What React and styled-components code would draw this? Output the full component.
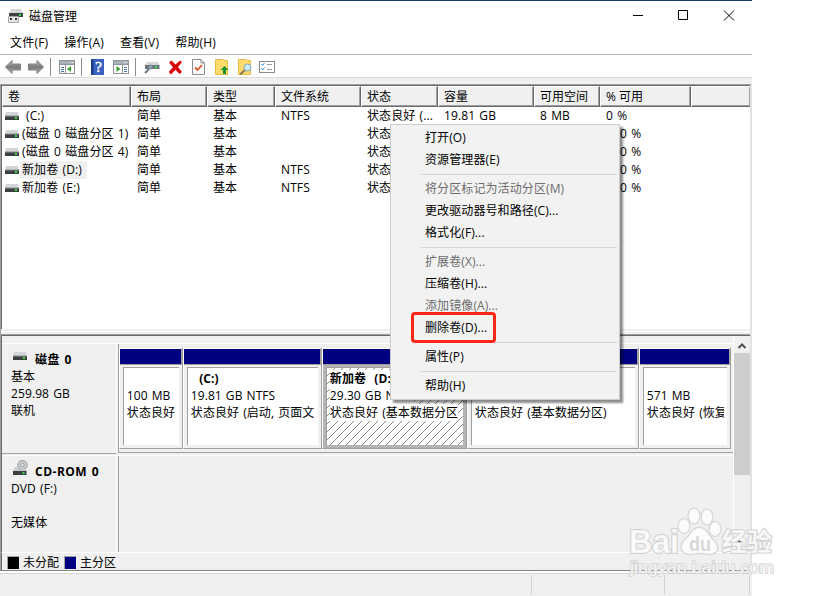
import styled, { createGlobalStyle } from "styled-components";

const columns = ['卷', '布局', '类型', '文件系统', '状态', '容量', '可用空间', '% 可用', '']

const volumes = [
    {name: '(C:)', fs: 'NTFS', status: '状态良好 (...', size: '19.81 GB', free: '8 MB', percent: '0 %', indent: true},
    {name: '(磁盘 0 磁盘分区 1)', status: '状态'},
    {name: '(磁盘 0 磁盘分区 4)', status: '状态'},
    {name: '新加卷 (D:)', fs: 'NTFS', status: '状态', selected: true},
    {name: '新加卷 (E:)', fs: 'NTFS', status: '状态'},
]

const partitions = [
    {name: '', size: '100 MB', status: '状态良好'},
    {name: '\u00a0\u00a0(C:)', size: '19.81 GB NTFS', status: '状态良好 (启动, 页面文'},
    {name: '新加卷\u00a0\u00a0(D:)', size: '29.30 GB NTFS', status: '状态良好 (基本数据分区', selected: true},
    {name: '', size: '', status: '状态良好 (基本数据分区)'},
    {name: '', size: '571 MB', status: '状态良好 (恢复'},
]

const menuGroups = [
    [{label: '打开(O)'}, {label: '资源管理器(E)'}],
    [{label: '将分区标记为活动分区(M)', disabled: true}, {label: '更改驱动器号和路径(C)...'}, {label: '格式化(F)...'}],
    [{label: '扩展卷(X)...', disabled: true}, {label: '压缩卷(H)...'}, {label: '添加镜像(A)...', disabled: true}, {label: '删除卷(D)...', marked: true}],
    [{label: '属性(P)'}],
    [{label: '帮助(H)'}],
]

function DriveIcon() {
    return (
        <svg width="14" height="9" viewBox="0 0 14 9">
            <path d="M1 0H13L14 4H0Z" fill="#d3d6d9" />
            <rect y="4" width="14" height="4" fill="#3c3f42" />
            <rect y="3.5" width="14" height="1" fill="#8e9296" />
            <rect x="10" y="5" width="2" height="2" fill="#35e04a" />
        </svg>
    )
}

function CdIcon() {
    return (
        <svg width="16" height="16" viewBox="0 0 16 16">
            <path d="M2 7H12L14 11H0Z" fill="#d3d6d9" />
            <circle cx="9.5" cy="5" r="4.6" fill="#ccd0d1" stroke="#92989a" />
            <circle cx="9.5" cy="5" r="1.7" fill="#f4f4f4" stroke="#92989a" />
            <path d="M2 9H12L14 11H0Z" fill="#c5c9cb" />
            <rect y="11" width="13.500" height="4" fill="#3c3f42" />
            <rect x="9.500" y="12" width="2" height="2" fill="#35e04a" />
        </svg>
    )
}

function AppIcon() {
    return (
        <svg width="17" height="16" viewBox="0 0 17 16">
            <path d="M4 1H14L16 5H2Z" fill="#d5d7d9" />
            <rect x="2" y="5" width="14" height="4" fill="#3d4042" />
            <rect x="12" y="6" width="2" height="2" fill="#35e04a" />
            <path d="M1.500 8.500H11.500V14.500H1.500Z" fill="#e7e7e7" stroke="#a4a7a9" />
            <rect x="3" y="10" width="2" height="2" fill="#333" />
            <rect x="8" y="10" width="2" height="2" fill="#333" />
        </svg>
    )
}

function Arrow({right}) {
    return (
        <svg width="17" height="16" viewBox="0 0 17 16">
            <defs>
                <linearGradient id="arrowFill" x1="0" y1="0" x2="0" y2="1">
                    <stop offset="0" stopColor="#c4c4c4" />
                    <stop offset="0.5" stopColor="#777" />
                    <stop offset="1" stopColor="#bbb" />
                </linearGradient>
            </defs>
            <path transform={right ? 'translate(16 0) scale(-1 1)' : undefined} d="M0.500 8L7 1.500V5H15.500V11H7V14.500Z" fill="url(#arrowFill)" stroke="#7d7d7d" strokeLinejoin="round" />
        </svg>
    )
}

function PaneIcon({right}) {
    return (
        <svg width="17" height="14" viewBox="0 0 17 14">
            <rect x="0.500" y="0.500" width="15" height="13" fill="#fff" stroke="#8e949b" />
            <rect x="1" y="1" width="14" height="3" fill="#a9b0b8" />
            <path d="M11 2.500H12M13 2.500H14" stroke="#fff" />
            <path d="M1 4.500H15" stroke="#8e949b" />
            {right ? (
                <>
                    <path d="M9.500 5V13" stroke="#8e949b" />
                    <path d="M11 7.500H14M11 9.500H14M11 11.500H14" stroke="#4b79b8" />
                    <path d="M3.500 6L7.500 9L3.500 12Z" fill="#36a226" />
                </>
            ) : (
                <>
                    <path d="M6.500 5V13" stroke="#8e949b" />
                    <path d="M2 7.500H5M2 9.500H5M2 11.500H5" stroke="#4b79b8" />
                    <path d="M12 6L8 9L12 12Z" fill="#36a226" />
                </>
            )}
        </svg>
    )
}

function HelpIcon() {
    return (
        <svg width="14" height="16" viewBox="-1 0 14 16">
            <rect width="13" height="16" fill="#3d62be" />
            <rect width="2.500" height="16" fill="#1d3c8c" />
            <text x="7.500" y="13" textAnchor="middle" fontSize="15" fontFamily="Liberation Serif, serif" fill="#fff" stroke="#fff" strokeWidth="0.400">?</text>
        </svg>
    )
}

function ConnectIcon() {
    return (
        <svg width="16" height="13" viewBox="0 0 16 13">
            <path d="M3 1H14L15.500 4H1.500Z" fill="#d3d7da" />
            <rect x="1" y="4" width="14.500" height="4" fill="#6e767c" />
            <rect x="11" y="5" width="2" height="2" fill="#35e04a" />
            <path d="M5 8L1 12" stroke="#6d7880" strokeWidth="2" />
            <circle cx="6.500" cy="6" r="2" fill="#8fa9bb" stroke="#73838f" />
        </svg>
    )
}

function DeleteIcon() {
    return (
        <svg width="15" height="15" viewBox="0 0 15 15">
            <path d="M1 2.500L3.500 0.500L7.500 4.500L12 0.500L14 2L10 7L14 12L11.500 14L7.500 9.700L3 14.500L0.700 12L5 7.200Z" fill="#d90008" />
        </svg>
    )
}

function CheckPageIcon() {
    return (
        <svg width="13" height="16" viewBox="0 0 13 16">
            <path d="M0.500 0.500H9L12.500 4V15.500H0.500Z" fill="#fafafa" stroke="#8c8c8c" />
            <path d="M9 0.500V4H12.500" fill="none" stroke="#8c8c8c" />
            <path d="M3 8.500L5.500 11L10 6" fill="none" stroke="#e5552a" strokeWidth="1.800" />
        </svg>
    )
}

function FolderIcon({search}) {
    return (
        <svg width="15" height="16" viewBox="0 0 15 16">
            <path d="M0.500 0.500H8L9 1.500H12.500V15.500H0.500Z" fill="#ffdc6b" stroke="#e8bb41" />
            {search ? (
                <>
                    <path d="M7 11L2 15.500" stroke="#8b7557" strokeWidth="2" />
                    <circle cx="9.500" cy="8.500" r="3.500" fill="#cfeafa" stroke="#7ba5bf" />
                </>
            ) : <path d="M9.500 7L13.500 11H11V15H8V11H5.500Z" fill="#18952a" />}
        </svg>
    )
}

function ListIcon() {
    return (
        <svg width="16" height="12" viewBox="0 0 16 12">
            <rect x="0.500" y="0.500" width="15" height="11" fill="#fff" stroke="#858c92" />
            <path d="M2.500 3L3.500 4.500L5.500 2M2.500 7.500L3.500 9L5.500 6.500" fill="none" stroke="#2f86d4" />
            <path d="M8 3.500H13M8 8.500H13" stroke="#999" />
        </svg>
    )
}

function Watermark() {
    return (
        <WatermarkBox>
            <svg width="160" height="76" viewBox="0 0 160 76">
                <g fill="#fff" fillOpacity="0.8" stroke="#d2d2d2" strokeWidth="2" paintOrder="stroke" fontFamily="Liberation Sans, Noto Sans CJK SC, sans-serif" fontWeight="700">
                    <text x="8" y="48" fontSize="33" textLength="50" lengthAdjust="spacingAndGlyphs">Bai</text>
                    <ellipse cx="63" cy="21" rx="5.500" ry="7" />
                    <ellipse cx="73" cy="11" rx="5.500" ry="7.500" />
                    <ellipse cx="86" cy="12" rx="5.500" ry="7.500" />
                    <ellipse cx="94" cy="24" rx="5.500" ry="7" />
                    <path d="M78 23C71 23 70 30 65 34C58 39 59 48 68 49C75 49 80 47 87 49C96 50 99 42 93 36C87 31 86 23 78 23Z" />
                    <text x="68" y="46" fontSize="20" fill="#cecece" stroke="none" textLength="22" lengthAdjust="spacingAndGlyphs">du</text>
                    <text x="101" y="46" fontSize="25">经验</text>
                    <text x="9" y="68" fontSize="16" strokeWidth="1.500" fontWeight="400" textLength="144" lengthAdjust="spacingAndGlyphs">jingyan.baidu.com</text>
                </g>
            </svg>
        </WatermarkBox>
    )
}

function Volume({volume}) {
    return (
        <Row>
            <NameCell>
                <DriveIcon />
                <VolumeName $selected={volume.selected} $indent={volume.indent}>{volume.name}</VolumeName>
            </NameCell>
            <Cell>简单</Cell>
            <Cell>基本</Cell>
            <Cell>{volume.fs}</Cell>
            <Cell>{volume.status}</Cell>
            <Cell>{volume.size}</Cell>
            <Cell>{volume.free}</Cell>
            <Cell $shift={!volume.percent}>{volume.percent || '0 %'}</Cell>
        </Row>
    )
}

function ContextMenu() {
    return (
        <Menu>
            {menuGroups.map((group, i) => (
                <MenuGroup key={i}>
                    {group.map((item) => (
                        <MenuItem key={item.label} $disabled={item.disabled}>
                            {item.label}
                            {item.marked && <Mark />}
                        </MenuItem>
                    ))}
                </MenuGroup>
            ))}
        </Menu>
    )
}

export default function App() {
    return (
        <>
            <GlobalStyle />
            <Window>
                <TitleBar>
                    <AppIcon />
                    <Title>磁盘管理</Title>
                    <Controls viewBox="0 0 104 12">
                        <path d="M0 5.500H10M45.500 0.500H54.500V9.500H45.500ZM91 0.500L101 10.500M101 0.500L91 10.500" fill="none" stroke="#000" />
                    </Controls>
                </TitleBar>
                <MenuBar>
                    <span>文件(F)</span>
                    <span>操作(A)</span>
                    <span>查看(V)</span>
                    <span>帮助(H)</span>
                </MenuBar>
                <Toolbar>
                    <Tool $w={23}><Arrow /></Tool>
                    <Tool $w={22}><Arrow right /></Tool>
                    <Divider />
                    <Tool $w={22}><PaneIcon /></Tool>
                    <Divider />
                    <Tool $w={23}><HelpIcon /></Tool>
                    <Tool $w={22}><PaneIcon right /></Tool>
                    <Divider />
                    <Tool $w={24}><ConnectIcon /></Tool>
                    <Tool $w={24}><DeleteIcon /></Tool>
                    <Tool $w={23}><CheckPageIcon /></Tool>
                    <Tool $w={23}><FolderIcon /></Tool>
                    <Tool $w={21}><FolderIcon search /></Tool>
                    <Tool $w={17}><ListIcon /></Tool>
                </Toolbar>
                <Panes>
                    <VolumeList>
                        <HeaderRow>
                            {columns.map((c) => <HeaderCell key={c}>{c}</HeaderCell>)}
                        </HeaderRow>
                        {volumes.map((v) => <Volume key={v.name} volume={v} />)}
                    </VolumeList>
                    <Splitter />
                    <Graphical>
                        <Disks>
                            <DiskRow $h={112}>
                                <DiskInfo>
                                    <DiskName><DriveIcon />磁盘 0</DiskName>
                                    <p>基本</p>
                                    <p>259.98 GB</p>
                                    <p>联机</p>
                                </DiskInfo>
                                <DiskMap>
                                    <Partitions>
                                        {partitions.map((p, i) => (
                                            <Partition key={i}>
                                                <Bar />
                                                <PartitionFrame $selected={p.selected}>
                                                    <PartitionBody $selected={p.selected}>
                                                        <strong>{p.name}</strong>
                                                        <p>{p.size}</p>
                                                        <p>{p.status}</p>
                                                    </PartitionBody>
                                                </PartitionFrame>
                                            </Partition>
                                        ))}
                                    </Partitions>
                                </DiskMap>
                            </DiskRow>
                            <DiskRow $h={97}>
                                <DiskInfo $last>
                                    <DiskName><CdIcon />CD-ROM 0</DiskName>
                                    <p>DVD (F:)</p>
                                    <p>&nbsp;</p>
                                    <p>无媒体</p>
                                </DiskInfo>
                                <DiskMap $empty />
                            </DiskRow>
                        </Disks>
                        <ScrollBar>
                            <ScrollArrow viewBox="0 0 16 17"><path d="M4.500 12L8 8.500L11.500 12" fill="none" stroke="#505050" strokeWidth="2" /></ScrollArrow>
                            <Thumb />
                            <ScrollArrow viewBox="0 0 16 17"><path d="M4.500 6.500L8 10.500L11.500 6.500" fill="none" stroke="#505050" strokeWidth="2" /></ScrollArrow>
                        </ScrollBar>
                    </Graphical>
                    <Legend>
                        <Swatch $color="#000" />
                        <span>未分配</span>
                        <Swatch $color="#000080" />
                        <span>主分区</span>
                    </Legend>
                </Panes>
                <StatusBar>
                    <StatusCell $w={532} />
                    <StatusCell $w={133} />
                    <StatusCell $w={85} />
                </StatusBar>
            </Window>
            <ContextMenu />
            <Watermark />
        </>
    )
}

const GlobalStyle = createGlobalStyle`
    * {
        box-sizing: border-box;
    }

    body {
        margin: 0;
        background-color: #fff;
        font-family: "Open Sans", "Noto Sans CJK SC", sans-serif;
        font-size: 12px;
        line-height: 17px;
        color: #000;
        overflow: hidden;
    }

    p {
        margin: 0;
    }

    svg {
        display: block;
        flex-shrink: 0;
    }
`

const Window = styled.div`
    width: 752px;
    height: 596px;
    display: flex;
    flex-direction: column;
    background-color: #f0f0f0;
    white-space: nowrap;
`

const TitleBar = styled.div`
    height: 31px;
    padding: 0 17px 0 7px;
    display: flex;
    align-items: center;
    border-top: 1px solid #183c66;
    background-color: #fff;
`

const Title = styled.span`
    margin-left: 5px;
    flex: 1;
`

const Controls = styled.svg`
    width: 104px;
    height: 12px;
    margin-right: -2px;
`

const MenuBar = styled.div`
    height: 24px;
    padding-left: 10px;
    display: flex;
    align-items: center;
    gap: 16px;
    letter-spacing: 0.2px;
    border-bottom: 1px solid #b4b4b4;
    background-color: #fff;
`

const Toolbar = styled.div`
    height: 23px;
    padding: 2px 0 0 5px;
    display: flex;
    align-items: center;
    border-bottom: 1px solid #dadada;
    background-color: #fff;
`

const Tool = styled.div`
    width: ${({$w}) => $w}px;
    display: flex;
`

const Divider = styled.div`
    width: 1px;
    height: 18px;
    margin-right: 8px;
    background-color: #8d8d8d;
`

const Panes = styled.div`
    height: 487px;
    margin-top: 6px;
    display: flex;
    flex-direction: column;
    border: solid #a0a0a0;
    border-width: 1px 0 0 1px;
    border-bottom: 1px solid #828282;
    border-right: 2px solid #e3e3e3;
`

const VolumeList = styled.div`
    height: 244px;
    border: solid #696969;
    border-width: 1px 0 0 1px;
    background-color: #fff;
`

const Row = styled.div`
    height: 18px;
    display: grid;
    grid-template-columns: 129px 76px 68px 86px 77px 96px 66px 91px 1fr;
    align-items: center;
`

const HeaderRow = styled(Row)`
    height: 21px;
    align-items: stretch;
    margin-bottom: -1px;
`

const HeaderCell = styled.div`
    padding: 1px 0 0 5px;
    border: 1px solid #fff;
    border-right-color: #696969;
    border-bottom-color: #696969;
    background-color: #f0f0f0;
    box-shadow: inset -1px -1px #a0a0a0;

    &:last-child {
        border-right: none;
    }
`

const Cell = styled.div`
    padding-left: ${({$shift}) => $shift ? 20 : 6}px;
    letter-spacing: 0.1px;
    word-spacing: 1px;
    overflow: hidden;
`

const NameCell = styled.div`
    padding: 1px 0 0 3px;
    display: flex;
    align-items: center;
    gap: 1px;
`

const VolumeName = styled.span`
    height: 18px;
    padding: 0 5px 0 ${({$indent}) => $indent ? 6 : 2}px;
    line-height: 18px;
    letter-spacing: 0.1px;
    word-spacing: 1px;
    background-color: ${({$selected}) => $selected ? '#f0f0f0' : 'transparent'};
`

const Splitter = styled.div`
    height: 7px;
    border-top: 2px solid #f0f0f0;
    border-bottom: 1px solid #696969;
    box-shadow: inset 0 1px #fff, inset 0 -1px #a0a0a0;
`

const Graphical = styled.div`
    height: 216px;
    display: flex;
    border-left: 1px solid #696969;
`

const Disks = styled.div`
    width: 732px;
    padding-top: 7px;
    border-right: 1px solid #fff;
`

const DiskRow = styled.div`
    height: ${({$h}) => $h}px;
    display: flex;
    border-top: 1px solid #fff;
`

const DiskInfo = styled.div`
    width: 115px;
    height: ${({$last}) => $last ? '96px' : '110px'};
    padding: 7px 0 0 9px;
    border-right: 1px solid #fff;
    border-bottom: ${({$last}) => $last ? 'none' : '1px solid #a0a0a0'};
    letter-spacing: 0.1px;
    word-spacing: 1px;
`

const DiskName = styled.div`
    height: 17px;
    padding-left: 2px;
    display: flex;
    gap: 8px;
    font-weight: 700;
    letter-spacing: 0.5px;

    svg {
        width: 14px;
        margin-top: 1px;
    }

    svg[height="16"] {
        width: 16px;
        margin: -3px -2px 0 0;
    }
`

const DiskMap = styled.div`
    width: 616px;
    height: ${({$empty}) => $empty ? '96px' : '109px'};
    margin-left: 1px;
    padding-top: 4px;
    border-left: 1px solid #a0a0a0;
    border-bottom: ${({$empty}) => $empty ? 'none' : '1px solid #a0a0a0'};
`

const Partitions = styled.div`
    display: grid;
    grid-template-columns: 64px 139px 145px 172px 92px;
`

const Partition = styled.div`
    height: 101px;
    border-right: 1px solid #a0a0a0;
    border-left: 1px solid #fff;
    border-bottom: 1px solid #a0a0a0;
    min-width: 0;
`

const Bar = styled.div`
    height: 16px;
    border-top: 1px solid #fff;
    border-right: 1px solid #a0a0a0;
    background-color: #000080;
`

const PartitionFrame = styled.div`
    height: 84px;
    padding: 2px 3px 3px;
    border-top: 1px solid #a0a0a0;
    background-color: ${({$selected}) => $selected ? '#b4b4b4' : '#f0f0f0'};
`

const PartitionBody = styled.div`
    height: 78px;
    padding: 2px 3px 0;
    border: solid #a0a0a0;
    border-width: 1px 0 0 1px;
    background: ${({$selected}) => $selected ? 'repeating-linear-gradient(135deg, #fff 0 4.95px, #8c8c8c 4.95px 5.657px)' : '#fff'};
    letter-spacing: 0.05px;
    word-spacing: 1px;
    overflow: hidden;

    strong, p {
        display: block;
        width: fit-content;
        max-width: 100%;
        height: 17px;
        overflow: hidden;
        background-color: #fff;
    }
`

const ScrollBar = styled.div`
    width: 16px;
    display: flex;
    flex-direction: column;
`

const ScrollArrow = styled.svg`
    width: 16px;
    height: 17px;
`

const Thumb = styled.div`
    height: 122px;
    margin-bottom: 59px;
    background-color: #cdcdcd;
`

const Legend = styled.div`
    height: 18px;
    padding: 1px 0 0 5px;
    display: flex;
    align-items: center;
    gap: 4px;
    border-left: 1px solid #696969;
    border-top: 1px solid #fff;

    span {
        width: 37px;
        height: 16px;
    }
`

const Swatch = styled.div`
    width: 12px;
    height: 13px;
    border: solid #a0a0a0;
    border-width: 1px 0 0 1px;
    background-color: ${({$color}) => $color};
`

const StatusBar = styled.div`
    flex: 1;
    display: flex;
    padding: 2px 0 1px;
    border-top: 2px solid #fff;
    box-shadow: inset 0 1px #d7d7d7;
`

const StatusCell = styled.div`
    width: ${({$w}) => $w}px;
    border-right: 1px solid #d2d2d2;
`

const Menu = styled.div`
    position: absolute;
    left: 390px;
    top: 124px;
    width: 230px;
    height: 276px;
    padding: 2px;
    border: 1px solid #ccc;
    background-color: #f2f2f2;
    box-shadow: 3px 3px 2px rgba(0, 0, 0, 0.45);
    white-space: nowrap;
`

const MenuGroup = styled.div`
    & + & {
        padding-top: 7px;
        background: linear-gradient(#d7d7d7, #d7d7d7) 28px 3px / 196px 1px no-repeat;
    }
`

const MenuItem = styled.div`
    position: relative;
    height: 22px;
    padding-left: 32px;
    line-height: 22px;
    letter-spacing: 0.1px;
    color: ${({$disabled}) => $disabled ? '#6d6d6d' : '#000'};
`

const Mark = styled.div`
    position: absolute;
    left: 18px;
    top: -5px;
    width: 85px;
    height: 31px;
    border: 3px solid #ff2617;
    border-radius: 4px;
`

const WatermarkBox = styled.div`
    position: absolute;
    left: 621px;
    top: 505px;
`
